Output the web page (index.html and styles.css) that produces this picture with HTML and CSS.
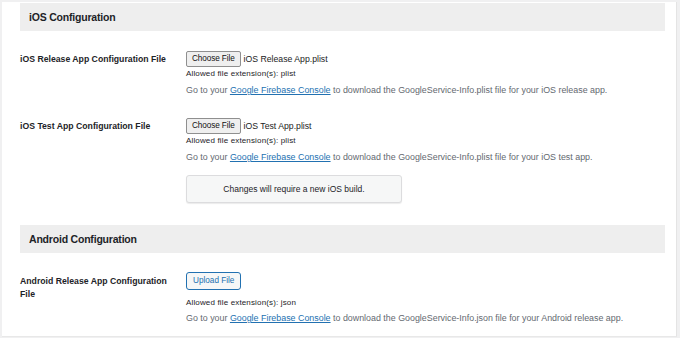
FILE: index.html
```html
<!DOCTYPE html>
<html>
<head>
<meta charset="utf-8">
<link rel="stylesheet" href="styles.css">
</head>
<body>
<div class="panel">
  <h2 class="section-head">iOS Configuration</h2>

  <div class="row row-first">
    <div class="label">iOS Release App Configuration File</div>
    <div class="field">
      <div class="file-line"><span class="btn-choose">Choose File</span><span class="file-name">iOS Release App.plist</span></div>
      <div class="allowed">Allowed file extension(s): plist</div>
      <div class="desc">Go to your <a href="#">Google Firebase Console</a> to download the GoogleService-Info.plist file for your iOS release app.</div>
    </div>
  </div>

  <div class="row row-second">
    <div class="label">iOS Test App Configuration File</div>
    <div class="field">
      <div class="file-line"><span class="btn-choose">Choose File</span><span class="file-name">iOS Test App.plist</span></div>
      <div class="allowed">Allowed file extension(s): plist</div>
      <div class="desc">Go to your <a href="#">Google Firebase Console</a> to download the GoogleService-Info.plist file for your iOS test app.</div>
      <div class="notice">Changes will require a new iOS build.</div>
    </div>
  </div>

  <h2 class="section-head section-android">Android Configuration</h2>

  <div class="row row-android">
    <div class="label label-wrap">Android Release App Configuration File</div>
    <div class="field">
      <div class="file-line"><span class="btn-upload">Upload File</span></div>
      <div class="allowed allowed-android">Allowed file extension(s): json</div>
      <div class="desc desc-android">Go to your <a href="#">Google Firebase Console</a> to download the GoogleService-Info.json file for your Android release app.</div>
    </div>
  </div>
</div>
</body>
</html>
```
FILE: styles.css
```css
html, body {
  margin: 0;
  padding: 0;
}
body {
  background: #f0f0f1;
  font-family: "Liberation Sans", Arial, sans-serif;
  color: #1d2327;
  width: 680px;
  height: 338px;
  overflow: hidden;
}
.panel {
  background: #ffffff;
  margin: 2px 0 0 2px;
  width: 645px;
  height: 333px;
  padding: 1px 11px 0 18px;
  box-sizing: content-box;
  border-right: 1px solid #e4e4e4;
  border-bottom: 1px solid #e8e8e8;
}
.section-head {
  margin: 0;
  background: #eeeeee;
  height: 28px;
  line-height: 28px;
  padding-left: 9px;
  font-size: 10.5px;
  letter-spacing: -0.2px;
  font-weight: bold;
  color: #1d2327;
}
.section-android {
  margin-top: 22px;
}
.row {
  display: grid;
  grid-template-columns: 166px 1fr;
}
.row-first {
  margin-top: 20px;
}
.row-second {
  margin-top: 22px;
}
.row-android {
  margin-top: 19px;
}
.label {
  font-size: 8.7px;
  font-weight: bold;
  line-height: 16px;
  color: #1d2327;
}
.label-wrap {
  width: 156px;
  line-height: 13px;
  padding-top: 3px;
}
.field {
  display: flex;
  flex-direction: column;
  align-items: flex-start;
}
.file-line {
  display: flex;
  align-items: center;
  height: 16px;
}
.btn-choose {
  display: inline-block;
  box-sizing: border-box;
  height: 16px;
  line-height: 14px;
  padding: 0 5px;
  font-size: 8.2px;
  letter-spacing: -0.1px;
  background: #efefef;
  border: 1px solid #8f8f8f;
  border-radius: 2px;
  color: #111;
}
.file-name {
  margin-left: 3px;
  font-size: 8.7px;
  color: #222;
}
.row-android .file-line {
  height: 18px;
}
.btn-upload {
  display: inline-block;
  box-sizing: border-box;
  height: 18px;
  line-height: 16px;
  padding: 0 6px;
  font-size: 8.2px;
  color: #2271b1;
  background: #f6f7f7;
  border: 1px solid #2271b1;
  border-radius: 3px;
}
.allowed {
  font-size: 8px;
  letter-spacing: 0.15px;
  line-height: 10px;
  margin-top: 2px;
  color: #1d2327;
}
.allowed-android {
  margin-top: 8px;
}
.desc {
  font-size: 8.9px;
  line-height: 12px;
  margin-top: 5px;
  color: #646970;
}
.desc-android {
  margin-top: 4px;
}
.desc a {
  color: #2271b1;
  text-decoration: underline;
}
.notice {
  margin-top: 12px;
  width: 216px;
  height: 28px;
  box-sizing: border-box;
  background: #f6f7f7;
  border: 1px solid #dcdcde;
  border-radius: 3px;
  box-shadow: 0 1px 1px rgba(0,0,0,0.08);
  text-align: center;
  line-height: 26px;
  font-size: 8.5px;
  color: #1d2327;
}
```
